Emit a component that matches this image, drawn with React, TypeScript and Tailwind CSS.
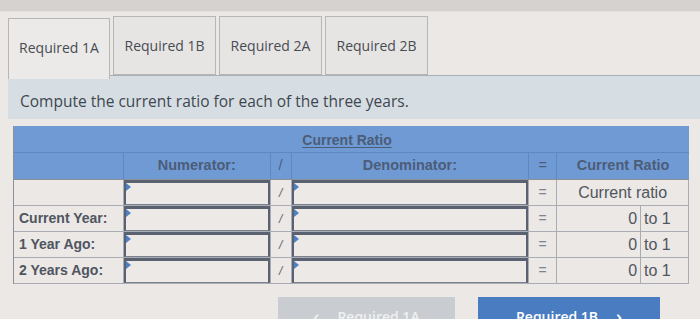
import React from "react";

const tabs = ["Required 1A", "Required 1B", "Required 2A", "Required 2B"];

const rows = [
  { label: "", result: "Current ratio" },
  { label: "Current Year:", result: "0" },
  { label: "1 Year Ago:", result: "0" },
  { label: "2 Years Ago:", result: "0" },
];

function Marker() {
  return (
    <span className="absolute left-0 top-0 w-0 h-0 border-t-[4px] border-b-[4px] border-l-[5px] border-t-transparent border-b-transparent border-l-[#4d7fc4]" />
  );
}

function InputCell({ width }: { width: string }) {
  return (
    <div className={`${width} h-[26px] border-b border-r border-[#a9adb3] bg-[#ebe8e5]`}>
      <div className="relative h-full border-x-2 border-t-[3px] border-b border-x-[#5a6272] border-t-[#5a6272] border-b-[#7a808c] bg-[#ece9e6]">
        <Marker />
      </div>
    </div>
  );
}

export default function App() {
  const font = { fontFamily: '"Liberation Sans", Arial, sans-serif' };
  return (
    <div className="w-[700px] h-[319px] overflow-hidden bg-[#ebe8e5] relative" style={{ fontFamily: '"Open Sans", sans-serif' }}>
      <div className="h-[12px] bg-[#d5d2cf] border-b border-[#e2dfdc]" />

      {/* tab strip */}
      <div className="flex items-start gap-[3px] pl-[8px] pt-[4px] h-[63px]">
        {tabs.map((t, i) => (
          <div
            key={t}
            className={
              i === 0
                ? "relative z-10 w-[102px] h-[61px] mt-[2px] border border-b-0 border-[#b8b6b4] bg-[#eceae8] flex items-center justify-center text-[14px] text-[#474c53]"
                : "w-[103px] h-[59px] border border-[#b8b6b4] bg-[#e7e5e3] flex items-center justify-center text-[14px] text-[#474c53]"
            }
          >
            <span className={i === 0 ? "-mt-[3px]" : ""}>{t}</span>
          </div>
        ))}
      </div>

      {/* instruction panel */}
      <div className="ml-[8px] border-t border-[#a9b1b7] bg-[#d7dee3] pl-[12px] pt-[15px] h-[44px]">
        <p className="text-[15.5px] leading-[20px] text-[#3e4750]">
          Compute the current ratio for each of the three years.
        </p>
      </div>

      {/* ratio table */}
      <div className="ml-[13px] mt-[7px] w-[676px] border-l border-[#8a9099] text-[14px] text-[#4a5669]" style={font}>
        <div className="h-[27px] bg-[#709ad4] border-b border-[#5f87c0] flex items-center">
          <div className="w-[506px] text-center font-bold underline underline-offset-2 text-[#4b5d78] pt-[2px] pl-[160px]">
            Current Ratio
          </div>
        </div>
        <div className="flex h-[27px] bg-[#709ad4] font-bold text-[#4b5d78] border-b border-[#8a9099] text-[14.5px]">
          <div className="w-[110px] border-r border-[#5f87c0]" />
          <div className="w-[147px] border-r border-[#5f87c0] flex items-center justify-center">Numerator:</div>
          <div className="w-[21px] border-r border-[#5f87c0] flex items-center justify-center font-normal">/</div>
          <div className="w-[238px] border-r border-[#5f87c0] flex items-center justify-center">Denominator:</div>
          <div className="w-[28px] border-r border-[#5f87c0] flex items-center justify-center font-normal">=</div>
          <div className="w-[132px] flex items-center justify-center">Current Ratio</div>
        </div>
        {rows.map((r, i) => (
          <div key={i} className="flex h-[26px]">
            <div className="w-[110px] border-r border-b border-[#a9adb3] flex items-center pl-[5px] font-bold text-[#4f5561]">
              {r.label}
            </div>
            <InputCell width="w-[147px]" />
            <div className="w-[21px] border-r border-b border-[#a9adb3] flex items-center justify-center text-[#5a6070] text-[12px] italic">
              /
            </div>
            <InputCell width="w-[238px]" />
            <div className="w-[28px] border-r border-b border-[#a9adb3] flex items-center justify-center text-[#7a8494] text-[14px]">
              =
            </div>
            {i === 0 ? (
              <div className="w-[132px] border-r border-b border-[#a9adb3] flex items-center justify-center text-[16px] text-[#50565f]">
                {r.result}
              </div>
            ) : (
              <>
                <div className="w-[84px] border-r border-b border-[#a9adb3] flex items-center justify-end pr-[3px] text-[16px] text-[#50565f]">
                  {r.result}
                </div>
                <div className="w-[48px] border-r border-b border-[#a9adb3] flex items-center pl-[3px] text-[16px] text-[#50565f]">
                  to 1
                </div>
              </>
            )}
          </div>
        ))}
      </div>

      {/* navigation buttons */}
      <div className="flex gap-[23px] pl-[278px] mt-[13px]">
        <button className="w-[177px] h-[30px] bg-[#c9cdd1] text-[#eef0f2] text-[14px] font-semibold flex items-start justify-center pt-[11px] gap-[18px]">
          <span className="text-[18px] leading-[16px]">&lsaquo;</span>
          <span className="leading-[18px]">Required 1A</span>
        </button>
        <button className="w-[182px] h-[30px] bg-[#4a7cc1] text-white text-[14px] font-semibold flex items-start justify-center pt-[11px] gap-[18px]">
          <span className="leading-[18px]">Required 1B</span>
          <span className="text-[18px] leading-[16px]">&rsaquo;</span>
        </button>
      </div>
    </div>
  );
}
